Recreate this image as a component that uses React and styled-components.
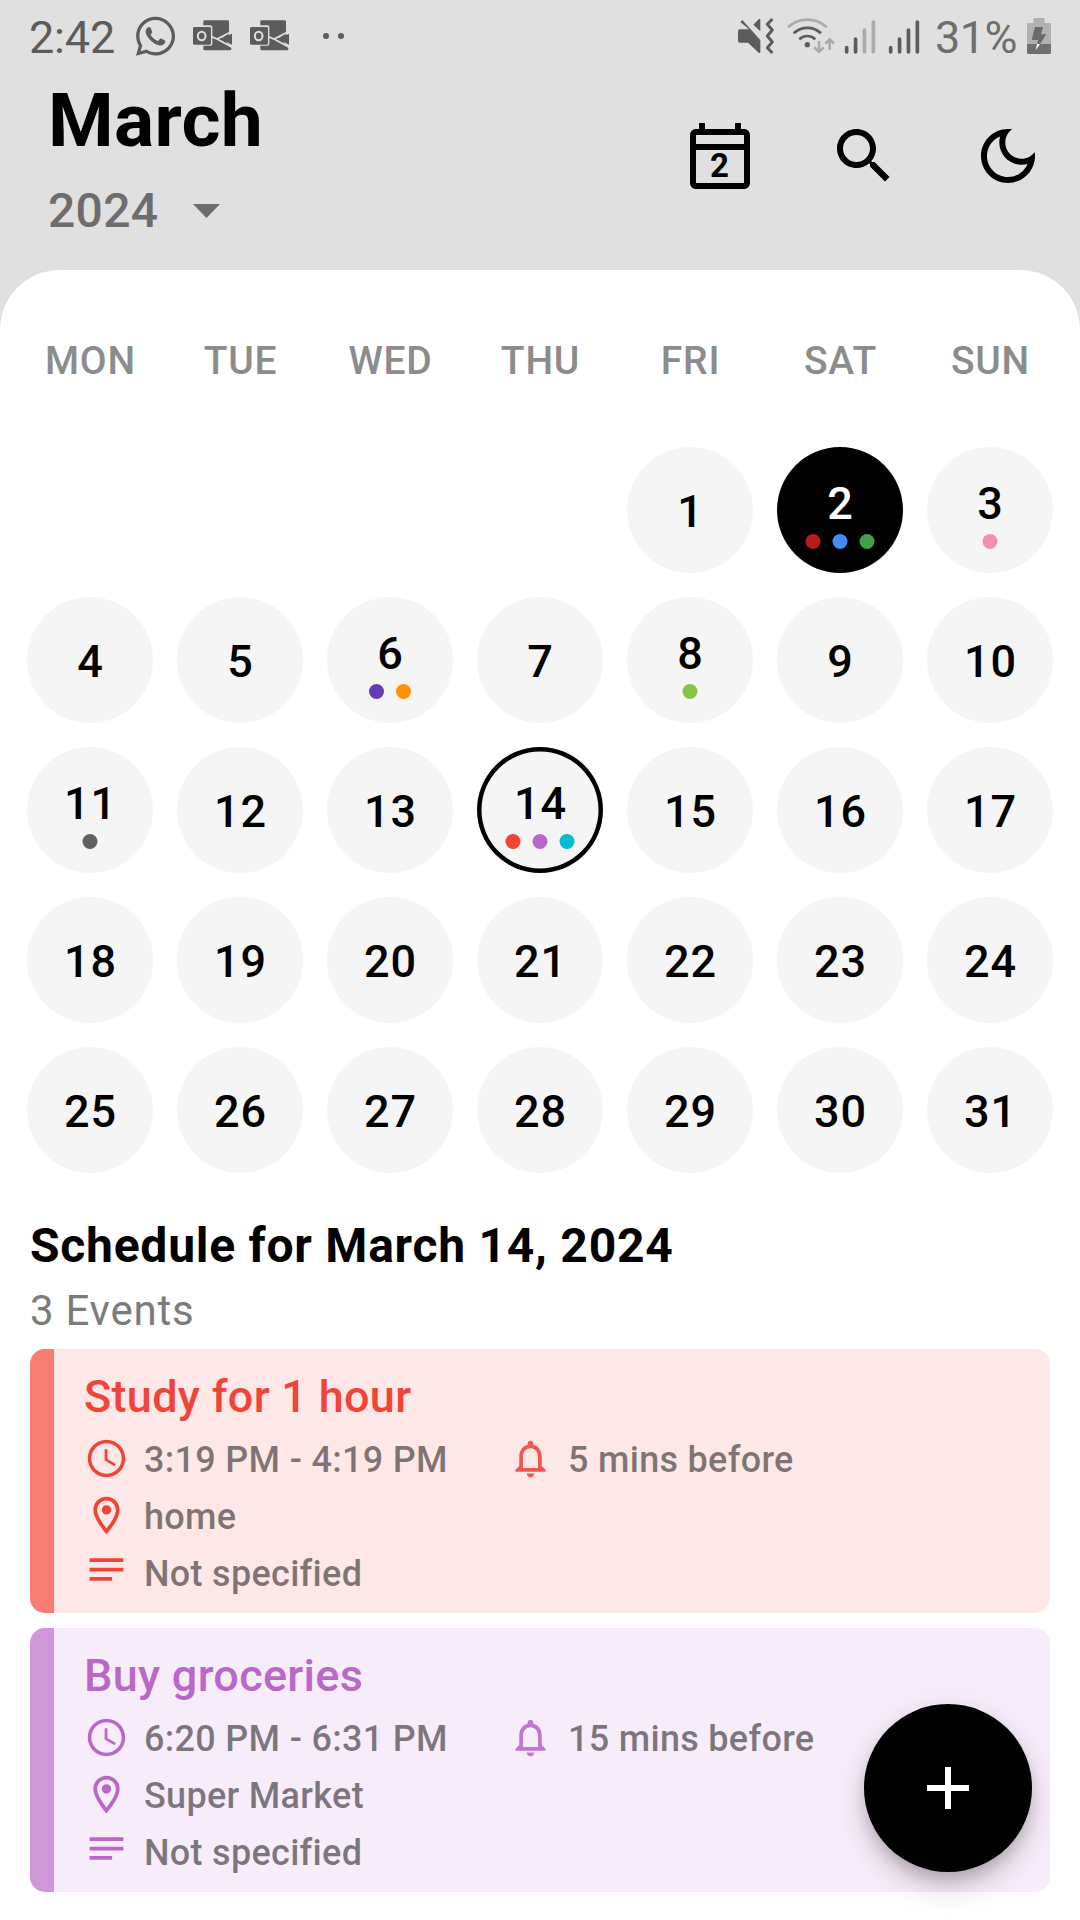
import React from "react";
import styled, { createGlobalStyle } from "styled-components";
import { FaWhatsapp } from "react-icons/fa";

const GlobalStyle = createGlobalStyle`
  *, *::before, *::after { box-sizing: border-box; }
  body {
    margin: 0;
    background: #e0e0e0;
    font-family: Roboto, "Noto Sans", sans-serif;
    font-kerning: normal;
  }
  h1, h2, h3, p { margin: 0; font-weight: inherit; }
  button { border: 0; padding: 0; background: none; font: inherit; color: inherit; }
  svg { display: block; flex: none; }
`;

const Screen = styled.div`
  position: relative;
  display: flex;
  flex-direction: column;
  width: 1080px;
  height: 1920px;
  overflow: hidden;
  background: #e0e0e0;
`;

/* ---------- status bar ---------- */

const StatusBar = styled.div`
  display: flex;
  justify-content: space-between;
  height: 72px;
  padding: 0 28px 0 29px;
  color: #5c5c5c;
`;

const StatusGroup = styled.div`
  display: flex;
  align-items: center;
`;

const StatusText = styled.span`
  width: ${(p) => p.$width}px;
  padding-top: 3px;
  font-size: 45px;
  line-height: 53px;
  letter-spacing: ${(p) => p.$spacing || 0}px;
  color: ${(p) => p.$color};
  white-space: nowrap;
`;

const Gap = styled.span`
  width: ${(p) => p.$size}px;
`;

const WhatsappIcon = styled(FaWhatsapp)`
  width: 39px;
  height: 44.6px;
`;

const OutlookIcon = () => (
  <svg width="41" height="40" viewBox="216 18 123 120">
    <path d="M254 31H323q4 0 4 4V80H250V35q0-4 4-4zM250 76H300L334 113V117q0 4-4 4H254q-4 0-4-4zM336 71V104L300 86z" fill="#5c5c5c" />
    <path d="M270 78L291 87L338 63M291 87L339 113" fill="none" stroke="#e0e0e0" strokeWidth="5" />
    <rect x="216" y="46" width="61" height="61" rx="6" fill="#e0e0e0" />
    <rect x="219" y="51" width="54" height="53" rx="4" fill="#5c5c5c" />
    <ellipse cx="245" cy="78" rx="11.5" ry="13" fill="none" stroke="#e0e0e0" strokeWidth="6" />
  </svg>
);

const MoreDots = () => (
  <svg width="24" height="40" viewBox="606 18 72 120" fill="#5c5c5c">
    <circle cx="618" cy="78" r="9" />
    <circle cx="663" cy="78" r="9" />
  </svg>
);

const MuteVibrateIcon = () => (
  <svg width="38" height="40" viewBox="21 18 114 120">
    <path d="M30 58H57L31 36L37 30L91 90V125Q91 131 86 128L54 98H30Q24 98 24 92V64Q24 58 30 58zM70 44L86 28Q91 24 91 31V64z" fill="#5c5c5c" />
    <path d="M127 27L112 43L127 60L112 78L127 96L112 113L127 129" fill="none" stroke="#5c5c5c" strokeWidth="9" strokeLinejoin="round" />
  </svg>
);

const WifiIcon = () => (
  <svg width="50" height="40" viewBox="168 18 150 120" fill="none" strokeWidth="8">
    <path d="M174 52A84 84 0 0 1 290 52" stroke="#ababab" />
    <path d="M191 70A59 59 0 0 1 273 70" stroke="#5c5c5c" />
    <path d="M208 88A34 34 0 0 1 256 88" stroke="#5c5c5c" />
    <circle cx="232" cy="104" r="8" fill="#5c5c5c" />
    <path d="M267 93V126M253 112L267 126L281 112M299 120V88M286 101L299 88L312 101" stroke="#ababab" strokeWidth="7.5" />
  </svg>
);

const SignalIcon = ({ level }) => (
  <svg width="32" height="40" viewBox="342 18 96 120" strokeWidth="11" strokeLinecap="round">
    {[113, 87, 60, 36].map((top, i) => (
      <path key={top} d={`M${350 + i * 26.7} ${top}V126`} stroke={i < level ? "#5c5c5c" : "#ababab"} />
    ))}
  </svg>
);

const BatteryIcon = () => (
  <svg width="26" height="40" viewBox="888 18 78 120">
    <path d="M910 39V27q0-3 3-3H941q3 0 3 3V39H959q4 0 4 4V102H891V43q0-4 4-4z" fill="#b1b1b1" />
    <path d="M891 102H963V128q0 4-4 4H895q-4 0-4-4z" fill="#6f6f6f" />
    <path d="M915 51H939L933 73H949L930 102H921L924 90H905z" fill="#6a6a6a" />
    <path d="M921 102H930L917 121z" fill="#fff" />
  </svg>
);

/* ---------- header ---------- */

const Header = styled.header`
  display: flex;
  justify-content: space-between;
  height: 198px;
  padding: 0 36px 0 48px;
`;

const Titles = styled.div`
  display: flex;
  flex-direction: column;
`;

const Month = styled.h1`
  padding-top: 3px;
  font-size: 75px;
  line-height: 90px;
  font-weight: 700;
  letter-spacing: 0.3px;
  color: #000;
`;

const YearPicker = styled.button`
  display: flex;
  align-items: center;
  gap: 35px;
  height: 60px;
  margin-top: 16px;
  font-size: 48px;
  line-height: 60px;
  font-weight: 500;
  letter-spacing: 0.3px;
  color: #6e6c6d;
`;

const Actions = styled.div`
  display: flex;
  gap: 72px;
  padding-top: 48px;
`;

const IconButton = styled.button`
  display: grid;
  place-items: center;
  width: 72px;
  height: 72px;
  color: #000;
`;

const TodayNumber = styled.span`
  grid-area: 1 / 1;
  padding: 19px 1px 0 0;
  font-size: 33px;
  line-height: 38px;
  font-weight: 700;
`;

const StackedIcon = styled.svg`
  grid-area: 1 / 1;
`;

const CalendarGlyph = () => (
  <StackedIcon width="72" height="72" viewBox="0 0 24 24" fill="currentColor">
    <path d="M20 3h-1V1h-2v2H7V1H5v2H4c-1.1 0-2 .9-2 2v16c0 1.1.9 2 2 2h16c1.1 0 2-.9 2-2V5c0-1.1-.9-2-2-2zm0 18H4V10h16v11zm0-13H4V5h16v3z" />
  </StackedIcon>
);

/* ---------- calendar ---------- */

const Sheet = styled.main`
  flex: 1;
  display: flex;
  flex-direction: column;
  padding-top: 15px;
  border-radius: 60px 60px 0 0;
  background: #fff;
`;

const WeekGrid = styled.div`
  display: grid;
  grid-template-columns: repeat(7, 150px);
  grid-auto-rows: 150px;
  justify-content: center;
`;

const Weekday = styled.div`
  display: flex;
  align-items: center;
  justify-content: center;
  padding: 1px 0 0 1px;
  font-size: 39px;
  font-weight: 500;
  letter-spacing: 0.8px;
  color: #8c8c8c;
`;

const Day = styled.button`
  display: flex;
  flex-direction: column;
  align-items: center;
  justify-content: center;
  place-self: center;
  grid-column-start: ${(p) => p.$column || "auto"};
  width: 126px;
  height: 126px;
  border-radius: 50%;
  background: ${(p) => (p.$today ? "#000" : "#f5f5f5")};
  color: ${(p) => (p.$today ? "#fff" : "#000")};
  box-shadow: ${(p) => (p.$selected ? "inset 0 0 0 4.5px #000" : "none")};
`;

const DayNumber = styled.span`
  padding: 3px 0 0 1px;
  font-size: 45px;
  line-height: 53px;
  font-weight: 500;
  letter-spacing: 1px;
`;

const Dots = styled.span`
  display: flex;
  gap: 12px;
  margin-bottom: -3px;
  padding-top: 4px;
  transform: ${(p) => (p.$odd ? "translateX(-0.5px)" : "none")};
`;

const Dot = styled.span`
  width: 15px;
  height: 15px;
  border-radius: 50%;
  background: ${(p) => p.$color};
`;

/* ---------- schedule ---------- */

const Schedule = styled.section`
  display: flex;
  flex-direction: column;
  gap: 15px;
  padding: 30px 30px 0;
`;

const ScheduleHead = styled.div`
  height: 119px;
  padding-top: 1px;
`;

const ScheduleTitle = styled.h2`
  font-size: 48px;
  line-height: 60px;
  font-weight: 700;
  letter-spacing: 0.75px;
  color: #000;
`;

const ScheduleCount = styled.p`
  padding-top: 5px;
  font-size: 42px;
  line-height: 60px;
  letter-spacing: 0.75px;
  color: #7b7b7b;
`;

const Card = styled.article`
  display: flex;
  height: 264px;
  border-radius: 15px;
  overflow: hidden;
  background: ${(p) => p.$tint};
`;

const CardStripe = styled.div`
  width: 24px;
  background: ${(p) => p.$color};
`;

const CardBody = styled.div`
  flex: 1;
  padding: 18px 0 0 30px;
  color: ${(p) => p.$color};
`;

const EventTitle = styled.h3`
  height: 66px;
  font-size: 45px;
  line-height: 59px;
  font-weight: 500;
  letter-spacing: 0.3px;
`;

const DetailRow = styled.div`
  display: flex;
  height: 57px;
`;

const Detail = styled.div`
  display: flex;
  gap: 15px;
  width: ${(p) => (p.$width ? `${p.$width}px` : "auto")};
`;

const IconSlot = styled.span`
  padding-top: ${(p) => p.$top}px;
  opacity: ${(p) => (p.$soft ? 0.88 : 1)};
`;

const DetailText = styled.span`
  padding-top: 2px;
  font-size: 36px;
  line-height: 51px;
  font-weight: 500;
  letter-spacing: 0.3px;
  color: rgba(0, 0, 0, 0.5);
  white-space: nowrap;
`;

const DETAIL_ICONS = {
  clock:
    "M11.99 2C6.47 2 2 6.48 2 12s4.47 10 9.99 10C17.52 22 22 17.52 22 12S17.52 2 11.99 2zM12 20.1c-4.47 0-8.1-3.63-8.1-8.1S7.53 3.9 12 3.9s8.1 3.63 8.1 8.1-3.63 8.1-8.1 8.1zM12.5 7H11v6l5.25 3.15.75-1.23-4.5-2.67z",
  pin: "M12 2C8.13 2 5 5.13 5 9c0 5.25 7 13 7 13s7-7.75 7-13c0-3.87-3.13-7-7-7zM7 9c0-2.76 2.24-5 5-5s5 2.24 5 5c0 2.88-2.88 7.19-5 9.88C9.92 16.21 7 11.85 7 9zM12 6.5a2.5 2.5 0 1 0 0 5a2.5 2.5 0 1 0 0-5z",
  notes: "M3 18h12v-2H3v2zM3 6v2h18V6H3zm0 7h18v-2H3v2z",
  bell: "M12 22c1.1 0 2-.9 2-2h-4c0 1.1.89 2 2 2zm6-6v-5c0-3.07-1.64-5.64-4.5-6.32V4c0-.83-.67-1.5-1.5-1.5s-1.5.67-1.5 1.5v.68C7.63 5.36 6 7.92 6 11v5l-2 2v1h16v-1l-2-2zm-2 1H8v-6c0-2.48 1.51-4.5 4-4.5s4 2.02 4 4.5v6z",
};

const DetailItem = ({ icon, text, width }) => (
  <Detail $width={width}>
    <IconSlot $top={icon === "notes" ? 0 : 3} $soft={icon === "bell"}>
      <svg width="45" height="45" viewBox="0 0 24 24" fill="currentColor">
        <path d={DETAIL_ICONS[icon]} />
      </svg>
    </IconSlot>
    <DetailText>{text}</DetailText>
  </Detail>
);

/* Floats above the event list. */
const AddButton = styled.button`
  position: absolute;
  right: 48px;
  bottom: 48px;
  display: grid;
  place-items: center;
  width: 168px;
  height: 168px;
  border-radius: 50%;
  background: #000;
  color: #fff;
  box-shadow: 0 9px 15px -3px rgba(0, 0, 0, 0.2), 0 18px 30px rgba(0, 0, 0, 0.12),
    0 3px 36px rgba(0, 0, 0, 0.06);
`;

/* ---------- data ---------- */

const WEEKDAYS = ["MON", "TUE", "WED", "THU", "FRI", "SAT", "SUN"];

const EVENT_DOTS = {
  2: ["#b71c1c", "#448aff", "#43a047"],
  3: ["#f48fb1"],
  6: ["#673ab7", "#ff9100"],
  8: ["#8bc34a"],
  11: ["#616161"],
  14: ["#f44336", "#ba68c8", "#00bcd4"],
};

const DAYS = Array.from({ length: 31 }, (_, i) => i + 1);

const EVENTS = [
  {
    title: "Study for 1 hour",
    time: "3:19 PM - 4:19 PM",
    reminder: "5 mins before",
    place: "home",
    note: "Not specified",
    color: "#f04438",
    stripe: "#f77c72",
    tint: "#fde8e7",
  },
  {
    title: "Buy groceries",
    time: "6:20 PM - 6:31 PM",
    reminder: "15 mins before",
    place: "Super Market",
    note: "Not specified",
    color: "#b968c7",
    stripe: "#cf95d9",
    tint: "#f7ecf9",
  },
];

export default function App() {
  return (
    <Screen>
      <GlobalStyle />
      <StatusBar>
        <StatusGroup>
          <StatusText $width={107} $color="#5c5c5c" $spacing={-0.2}>2:42</StatusText>
          <WhatsappIcon />
          <Gap $size={17} />
          <OutlookIcon />
          <Gap $size={16} />
          <OutlookIcon />
          <Gap $size={32} />
          <MoreDots />
        </StatusGroup>
        <StatusGroup>
          <MuteVibrateIcon />
          <Gap $size={11} />
          <WifiIcon />
          <Gap $size={8} />
          <SignalIcon level={2} />
          <Gap $size={12} />
          <SignalIcon level={4} />
          <Gap $size={15} />
          <StatusText $width={91} $color="#6e6e6e" $spacing={-0.6}>31%</StatusText>
          <BatteryIcon />
        </StatusGroup>
      </StatusBar>

      <Header>
        <Titles>
          <Month>March</Month>
          <YearPicker>
            2024
            <svg width="27" height="14" viewBox="0 0 10 5" preserveAspectRatio="none" fill="currentColor">
              <path d="M0 0h10L5 5z" />
            </svg>
          </YearPicker>
        </Titles>
        <Actions>
          <IconButton aria-label="Today">
            <CalendarGlyph />
            <TodayNumber>2</TodayNumber>
          </IconButton>
          <IconButton aria-label="Search">
            <svg width="72" height="72" viewBox="0 0 24 24" fill="currentColor">
              <path d="M15.5 14h-.79l-.28-.27C15.41 12.59 16 11.11 16 9.5 16 5.91 13.09 3 9.5 3S3 5.91 3 9.5 5.91 16 9.5 16c1.61 0 3.09-.59 4.23-1.57l.27.28v.79l5 4.99L20.49 19l-4.99-5zm-6 0C7.01 14 5 11.99 5 9.5S7.01 5 9.5 5 14 7.01 14 9.5 11.99 14 9.5 14z" />
            </svg>
          </IconButton>
          <IconButton aria-label="Dark mode">
            <svg width="72" height="72" viewBox="0 0 24 24" fill="currentColor">
              <path d="M9.37 5.51C9.19 6.15 9.1 6.82 9.1 7.5c0 4.08 3.32 7.4 7.4 7.4.68 0 1.35-.09 1.99-.27C17.45 17.19 14.93 19 12 19c-3.86 0-7-3.14-7-7 0-2.93 1.81-5.45 4.37-6.49zM12 3c-4.97 0-9 4.03-9 9s4.03 9 9 9 9-4.03 9-9c0-.46-.04-.92-.1-1.36-.98 1.37-2.58 2.26-4.4 2.26-2.98 0-5.4-2.42-5.4-5.4 0-1.81.89-3.42 2.26-4.4C12.92 3.04 12.46 3 12 3z" />
            </svg>
          </IconButton>
        </Actions>
      </Header>

      <Sheet>
        <WeekGrid>
          {WEEKDAYS.map((name) => (
            <Weekday key={name}>{name}</Weekday>
          ))}
          {DAYS.map((n) => (
            <Day key={n} $column={n === 1 ? 5 : undefined} $today={n === 2} $selected={n === 14}>
              <DayNumber>{n}</DayNumber>
              {EVENT_DOTS[n] && (
                <Dots $odd={EVENT_DOTS[n].length % 2 === 1}>
                  {EVENT_DOTS[n].map((c) => (
                    <Dot key={c} $color={c} />
                  ))}
                </Dots>
              )}
            </Day>
          ))}
        </WeekGrid>

        <Schedule>
          <ScheduleHead>
            <ScheduleTitle>Schedule for March 14, 2024</ScheduleTitle>
            <ScheduleCount>3 Events</ScheduleCount>
          </ScheduleHead>
          {EVENTS.map((e) => (
            <Card key={e.title} $tint={e.tint}>
              <CardStripe $color={e.stripe} />
              <CardBody $color={e.color}>
                <EventTitle>{e.title}</EventTitle>
                <DetailRow>
                  <DetailItem icon="clock" text={e.time} width={424} />
                  <DetailItem icon="bell" text={e.reminder} />
                </DetailRow>
                <DetailRow>
                  <DetailItem icon="pin" text={e.place} />
                </DetailRow>
                <DetailRow>
                  <DetailItem icon="notes" text={e.note} />
                </DetailRow>
              </CardBody>
            </Card>
          ))}
        </Schedule>
      </Sheet>

      <AddButton aria-label="Add event">
        <svg width="72" height="72" viewBox="0 0 24 24" fill="currentColor">
          <path d="M19 13h-6v6h-2v-6H5v-2h6V5h2v6h6v2z" />
        </svg>
      </AddButton>
    </Screen>
  );
}
